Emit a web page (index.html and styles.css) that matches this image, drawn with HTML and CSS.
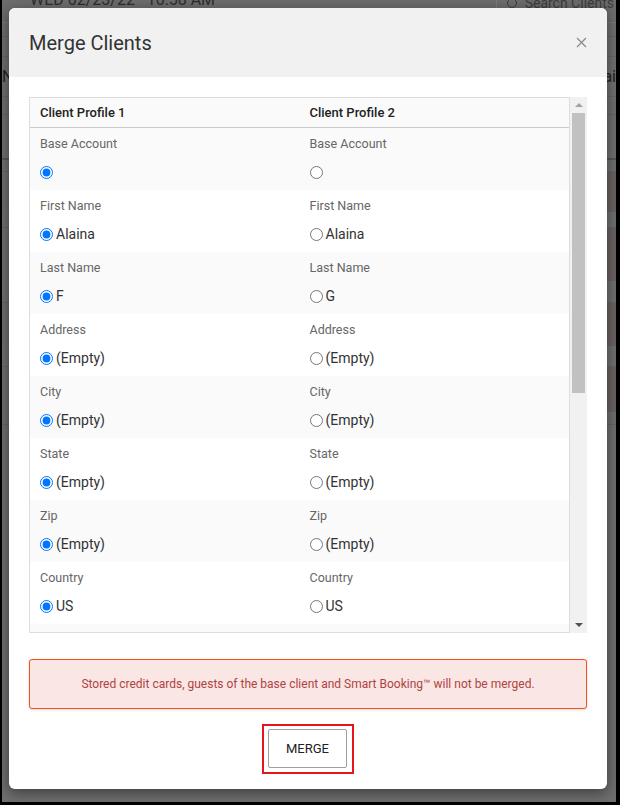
FILE: index.html
```html
<!DOCTYPE html>
<html lang="en">
<head>
    <meta charset="UTF-8">
    <meta name="viewport" content="width=device-width, initial-scale=1.0">
    <title>Merge Clients</title>
    <link rel="stylesheet" href="styles.css">
</head>
<body>

<div class="screen">

    <div class="page">
        <div class="page-bar">
            <span class="page-date">WED 02/23/22 &nbsp; 10:58 AM</span>
            <span class="page-search"><span class="search-ring"></span>Search Clients</span>
        </div>
        <div class="page-row row-14"></div>
        <div class="page-row row-20"></div>
        <div class="page-row page-head"><span>N</span><span>Emai</span></div>
        <div class="page-row row-18"></div>
        <div class="page-row row-45 dark-line"></div>
        <div class="page-gap gap-12"></div>
        <div class="page-band band-40"></div>
        <div class="page-gap gap-16"></div>
        <div class="page-band band-53"></div>
        <div class="page-gap gap-22"></div>
        <div class="page-band band-43"></div>
        <div class="page-gap gap-21"></div>
        <div class="page-band band-45"></div>
        <div class="page-row row-13"></div>
    </div>

    <div class="modal">
        <div class="modal-header">
            <h2>Merge Clients</h2>
            <button class="close" aria-label="Close">
                <svg width="11" height="11" viewBox="0 0 11 11">
                    <path d="M1 1 L10 10 M10 1 L1 10" stroke="#8a8a8a" stroke-width="1.2" fill="none"/>
                </svg>
            </button>
        </div>

        <div class="modal-body">
            <div class="scroll-box">
                <div class="table-wrap">
                    <div class="merge-row merge-head">
                        <div class="cell">Client Profile 1</div>
                        <div class="cell">Client Profile 2</div>
                    </div>
                    <div id="rows"></div>
                </div>
                <div class="scrollbar">
                    <span class="arrow arrow-up"></span>
                    <span class="thumb"></span>
                    <span class="arrow arrow-down"></span>
                </div>
            </div>

            <div class="alert">
                Stored credit cards, guests of the base client and Smart Booking™ will not be merged.
            </div>

            <div class="actions">
                <div class="highlight">
                    <button class="merge-btn">MERGE</button>
                </div>
            </div>
        </div>
    </div>

</div>

<script>
    const fields = [
        { label: 'Base Account', a: '', b: '' },
        { label: 'First Name', a: 'Alaina', b: 'Alaina' },
        { label: 'Last Name', a: 'F', b: 'G' },
        { label: 'Address', a: '(Empty)', b: '(Empty)' },
        { label: 'City', a: '(Empty)', b: '(Empty)' },
        { label: 'State', a: '(Empty)', b: '(Empty)' },
        { label: 'Zip', a: '(Empty)', b: '(Empty)' },
        { label: 'Country', a: 'US', b: 'US' }
    ];

    const rows = document.getElementById('rows');
    fields.forEach((field, index) => {
        const row = document.createElement('div');
        row.className = 'merge-row';
        ['a', 'b'].forEach(side => {
            const cell = document.createElement('div');
            cell.className = 'cell';
            cell.innerHTML =
                '<div class="field-label">' + field.label + '</div>' +
                '<label class="field-value">' +
                '<input type="radio" name="f' + index + '"' + (side === 'a' ? ' checked' : '') + '>' +
                field[side] + '</label>';
            row.appendChild(cell);
        });
        rows.appendChild(row);
    });

    // next row, scrolled out of view
    const more = document.createElement('div');
    more.className = 'merge-row';
    rows.appendChild(more);
</script>
</body>
</html>
```

FILE: styles.css
```css
* {
    box-sizing: border-box;
}

body {
    margin: 0;
    background-color: #000;
    font-family: Roboto, "Liberation Sans", Arial, sans-serif;
}

.screen {
    position: relative;
    width: 614px;
    height: 802px;
    margin-left: 2px;
    background-color: #6f6f6f;
    overflow: hidden;
}

/* ---- dimmed page behind ---- */

.page-bar {
    height: 23px;
    display: flex;
    justify-content: space-between;
    align-items: flex-end;
    padding: 0 2px 0 28px;
    background-color: #6c6c6c;
    border-bottom: 1px solid #787878;
    color: #2c2c2c;
    font-size: 16px;
    line-height: 16px;
}

.page-date {
    margin-bottom: 14px;
}

.page-search {
    display: flex;
    align-items: center;
    gap: 8px;
    height: 23px;
    padding: 0 0 16px 10px;
    font-size: 14px;
    color: #3c3c3c;
    border-left: 1px solid #7a7a7a;
}

.search-ring {
    width: 10px;
    height: 10px;
    border: 1px solid #3c3c3c;
    border-radius: 50%;
}

.page-row {
    border-bottom: 1px solid #656565;
}

.row-14 { height: 14px; }
.row-20 { height: 20px; }
.row-18 { height: 18px; }
.row-45 { height: 45px; }
.row-13 { height: 13px; }

.dark-line {
    border-bottom: 2px solid #555;
}

.page-head {
    height: 40px;
    display: flex;
    justify-content: space-between;
    align-items: center;
    color: #222;
    font-size: 16px;
}

.page-gap {
    background-color: #707070;
    border-bottom: 1px solid #666;
}

.gap-12 { height: 12px; }
.gap-16 { height: 16px; }
.gap-22 { height: 22px; }
.gap-21 { height: 21px; }

.page-band {
    margin-left: 300px;
    background-color: #6b6262;
}

.band-40 { height: 40px; }
.band-53 { height: 53px; }
.band-43 { height: 43px; }
.band-45 { height: 45px; }

/* ---- modal ---- */

.modal {
    position: absolute;
    left: 7px;
    top: 8px;
    width: 598px;
    height: 781px;
    background-color: #fff;
    border-radius: 6px;
    box-shadow: 0 4px 14px rgba(0, 0, 0, 0.45);
    overflow: hidden;
}

.modal-header {
    height: 69px;
    display: flex;
    justify-content: space-between;
    align-items: center;
    padding: 0 20px;
    background-color: #f0f1f0;
}

.modal-header h2 {
    margin: 0;
    font-size: 20px;
    font-weight: 400;
    color: #333;
}

.close {
    display: flex;
    padding: 0;
    border: none;
    background: none;
    cursor: pointer;
}

.modal-body {
    padding: 20px;
}

.scroll-box {
    display: flex;
    height: 536px;
}

.table-wrap {
    flex: 1;
    border: 1px solid #ddd;
    overflow: hidden;
}

.merge-row {
    display: grid;
    grid-template-columns: 1fr 1fr;
    height: 62px;
}

.merge-row:nth-child(odd) {
    background-color: #fafafa;
}

.merge-head {
    height: 30px;
    border-bottom: 1px solid #ccc;
    font-size: 13px;
    font-weight: 500;
    color: #222;
    align-items: center;
}

.cell {
    padding: 0 10px;
}

#rows .cell {
    padding-top: 8px;
}

.field-label {
    height: 16px;
    line-height: 16px;
    font-size: 12.5px;
    color: #666;
}

.field-value {
    display: flex;
    align-items: center;
    height: 20px;
    margin-top: 10px;
    font-size: 14px;
    color: #333;
}

.field-value input {
    margin: 0 3px 0 0;
    width: 13px;
    height: 13px;
}

.scrollbar {
    width: 17px;
    display: flex;
    flex-direction: column;
    align-items: center;
    background-color: #f1f1f1;
}

.arrow {
    width: 0;
    height: 0;
    border-left: 4px solid transparent;
    border-right: 4px solid transparent;
}

.arrow-up {
    margin-top: 6px;
    border-bottom: 4px solid #a3a3a3;
}

.arrow-down {
    margin-top: auto;
    margin-bottom: 6px;
    border-top: 4px solid #505050;
}

.thumb {
    width: 13px;
    height: 280px;
    margin-top: 6px;
    background-color: #c1c1c1;
}

.alert {
    height: 50px;
    margin-top: 26px;
    display: flex;
    align-items: center;
    justify-content: center;
    background-color: #fae6e5;
    border: 1px solid #f4511e;
    border-radius: 3px;
    box-shadow: 0 1px 3px rgba(0, 0, 0, 0.15);
    color: #ae4441;
    font-size: 12px;
}

.actions {
    display: flex;
    justify-content: center;
    margin-top: 15px;
}

.highlight {
    padding: 3px 5px 4px 4px;
    border: 2px solid #e8141b;
}

.merge-btn {
    display: block;
    width: 79px;
    height: 39px;
    background-color: #fff;
    border: 1px solid #9e9e9e;
    border-radius: 2px;
    font-family: inherit;
    font-size: 13px;
    color: #222;
    cursor: pointer;
}
```
